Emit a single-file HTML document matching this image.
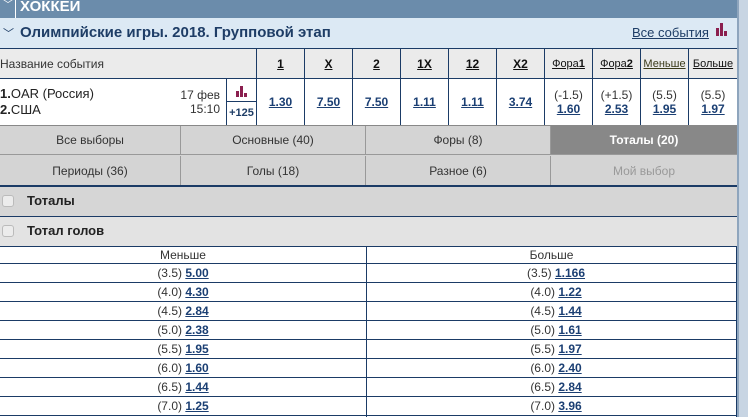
<!DOCTYPE html>
<html><head><meta charset="utf-8"><style>
*{box-sizing:border-box;margin:0;padding:0}
body{width:748px;height:417px;overflow:hidden;background:#fff;font-family:"Liberation Sans",Arial,sans-serif;font-size:12px;color:#333;position:relative}
.a{position:absolute}
.c{display:flex;align-items:center;justify-content:center}
a{color:#1b3f73;text-decoration:underline;font-weight:bold}
.hd a{color:#111;font-weight:bold}
.bar{display:inline-block;position:relative;width:12px;height:12px}
.bar i{position:absolute;bottom:0;width:3px;background:#8b1f4f}
</style></head><body>
<div class="a" style="left:737px;top:0;width:11px;height:417px;background:#c8d5e3;border-left:2px solid #8ea5bd"></div>
<div class="a" style="left:0;top:0;width:737px;height:18px;background:#6b8cab;color:#fff;font-weight:bold;font-size:15px;line-height:14px;padding-left:20px">ХОККЕЙ</div>
<div class="a" style="left:0;top:0;width:16px;height:18px;border-right:1px solid #fff;color:#fff;font-size:10px;line-height:12px;padding-left:3px">﹀</div>
<div class="a" style="left:0;top:18px;width:737px;height:30px;background:#dce9f4"></div>
<div class="a" style="left:3px;top:25px;color:#1e3d66;font-size:11px">﹀</div>
<div class="a" style="left:20px;top:24px;color:#1e3d66;font-weight:bold;font-size:15px">Олимпийские игры. 2018. Групповой этап</div>
<div class="a" style="left:632px;top:25px;font-size:13px"><a style="font-weight:normal;color:#1e3d66">Все события</a></div>
<div class="a" style="left:716px;top:24px"><span class="bar"><i style="left:0;height:8px"></i><i style="left:4px;height:13px"></i><i style="left:8px;height:5px"></i></span></div>
<div class="a" style="left:0;top:48px;width:737px;height:31px;background:#ebebeb;border-top:1px solid #1b3b66;border-bottom:1px solid #1b3b66"></div>
<div class="a" style="left:0;top:57px;font-size:12px;color:#333">Название события</div>
<div class="a hd" style="left:256px;top:48px;width:481px;height:31px;display:flex">
<div class="c" style="width:48px;border-left:1px solid #1b3b66"><a>1</a></div>
<div class="c" style="width:48px;border-left:1px solid #1b3b66"><a>X</a></div>
<div class="c" style="width:48px;border-left:1px solid #1b3b66"><a>2</a></div>
<div class="c" style="width:48px;border-left:1px solid #1b3b66"><a>1X</a></div>
<div class="c" style="width:48px;border-left:1px solid #1b3b66"><a>12</a></div>
<div class="c" style="width:48px;border-left:1px solid #1b3b66"><a>X2</a></div>
<div class="c" style="width:48px;border-left:1px solid #1b3b66;font-size:11px"><a style="font-weight:normal">Фора<b>1</b></a></div>
<div class="c" style="width:48px;border-left:1px solid #1b3b66;font-size:11px"><a style="font-weight:normal">Фора<b>2</b></a></div>
<div class="c" style="width:48px;border-left:1px solid #1b3b66;font-size:11px"><a style="font-weight:normal;color:#3a3a1a">Меньше</a></div>
<div class="c" style="width:49px;border-left:1px solid #1b3b66;font-size:11px"><a style="font-weight:normal">Больше</a></div>
</div>
<div class="a" style="left:0;top:86px;font-size:13px;line-height:16px;color:#222"><b>1.</b>OAR (Россия)<br><b>2.</b>США</div>
<div class="a" style="left:150px;top:88px;width:70px;text-align:right;font-size:12px;line-height:14px;color:#333">17 фев<br>15:10</div>
<div class="a" style="left:226px;top:79px;width:30px;height:46px;border-left:1px solid #1b3b66"></div>
<div class="a" style="left:226px;top:101px;width:30px;height:1px;background:#1b3b66"></div>
<div class="a" style="left:236px;top:85px"><span class="bar"><i style="left:0;height:6px"></i><i style="left:4px;height:11px"></i><i style="left:8px;height:4px"></i></span></div>
<div class="a" style="left:227px;top:107px;width:29px;text-align:center;font-size:11px;font-weight:bold;color:#1e3d66">+125</div>
<div class="a" style="left:256px;top:79px;width:481px;height:46px;display:flex;font-size:12px">
<div class="c" style="width:48px;border-left:1px solid #1b3b66"><a>1.30</a></div>
<div class="c" style="width:48px;border-left:1px solid #1b3b66"><a>7.50</a></div>
<div class="c" style="width:48px;border-left:1px solid #1b3b66"><a>7.50</a></div>
<div class="c" style="width:48px;border-left:1px solid #1b3b66"><a>1.11</a></div>
<div class="c" style="width:48px;border-left:1px solid #1b3b66"><a>1.11</a></div>
<div class="c" style="width:48px;border-left:1px solid #1b3b66"><a>3.74</a></div>
<div class="c" style="width:48px;border-left:1px solid #1b3b66;flex-direction:column;line-height:14px"><span>(-1.5)</span><a>1.60</a></div>
<div class="c" style="width:48px;border-left:1px solid #1b3b66;flex-direction:column;line-height:14px"><span>(+1.5)</span><a>2.53</a></div>
<div class="c" style="width:48px;border-left:1px solid #1b3b66;flex-direction:column;line-height:14px"><span>(5.5)</span><a>1.95</a></div>
<div class="c" style="width:49px;border-left:1px solid #1b3b66;flex-direction:column;line-height:14px"><span>(5.5)</span><a>1.97</a></div>
</div>
<div class="a" style="left:0;top:125px;width:737px;height:61px;background:#d4d4d4;border-top:1px solid #888"></div>
<div class="a" style="left:0;top:126px;width:737px;height:60px;display:flex;flex-wrap:wrap;color:#333">
<div class="c" style="width:181px;height:29px;border-right:1px solid #999;border-bottom:1px solid #999">Все выборы</div>
<div class="c" style="width:185px;height:29px;border-right:1px solid #999;border-bottom:1px solid #999">Основные (40)</div>
<div class="c" style="width:185px;height:29px;border-right:1px solid #999;border-bottom:1px solid #999">Форы (8)</div>
<div class="c" style="width:186px;height:29px;background:#888;color:#fff;font-weight:bold;border-bottom:1px solid #999">Тоталы (20)</div>
<div class="c" style="width:181px;height:30px;border-right:1px solid #999">Периоды (36)</div>
<div class="c" style="width:185px;height:30px;border-right:1px solid #999">Голы (18)</div>
<div class="c" style="width:185px;height:30px;border-right:1px solid #999">Разное (6)</div>
<div class="c" style="width:186px;height:30px;color:#999">Мой выбор</div>
</div>
<div class="a" style="left:0;top:185px;width:737px;height:32px;background:#d6d6d6;border-top:2px solid #1b3b66;border-bottom:1px solid #1b3b66"></div>
<div class="a" style="left:2px;top:195px;width:12px;height:12px;border:1px solid #bbb;background:#ececec;border-radius:3px"></div>
<div class="a" style="left:27px;top:193px;font-weight:bold;font-size:13px;color:#222">Тоталы</div>
<div class="a" style="left:0;top:217px;width:737px;height:30px;background:#e3e3e3;border-bottom:1px solid #1b3b66"></div>
<div class="a" style="left:2px;top:225px;width:12px;height:12px;border:1px solid #bbb;background:#ececec;border-radius:3px"></div>
<div class="a" style="left:27px;top:223px;font-weight:bold;font-size:13px;color:#222">Тотал голов</div>
<div class="a" style="left:0;top:247px;width:737px;height:17px;background:#fff;border-bottom:1px solid #1b3b66"></div>
<div class="a" style="left:0;top:248px;width:366px;text-align:center">Меньше</div>
<div class="a" style="left:366px;top:248px;width:371px;text-align:center">Больше</div>
<div class="a" style="left:366px;top:247px;width:1px;height:170px;background:#1b3b66"></div>
<div class="a" style="left:736px;top:247px;width:1px;height:170px;background:#1b3b66"></div>
<div class="a" style="left:0;top:264px;width:736px">
<style>.r{height:19px;border-bottom:1px solid #1b3b66;display:flex;line-height:18px}.r div{text-align:center}.r div:first-child{width:366px}.r div:last-child{width:370px;padding-left:10px}</style>
<div class="r"><div>(3.5) <a>5.00</a></div><div>(3.5) <a>1.166</a></div></div>
<div class="r"><div>(4.0) <a>4.30</a></div><div>(4.0) <a>1.22</a></div></div>
<div class="r"><div>(4.5) <a>2.84</a></div><div>(4.5) <a>1.44</a></div></div>
<div class="r"><div>(5.0) <a>2.38</a></div><div>(5.0) <a>1.61</a></div></div>
<div class="r"><div>(5.5) <a>1.95</a></div><div>(5.5) <a>1.97</a></div></div>
<div class="r"><div>(6.0) <a>1.60</a></div><div>(6.0) <a>2.40</a></div></div>
<div class="r"><div>(6.5) <a>1.44</a></div><div>(6.5) <a>2.84</a></div></div>
<div class="r"><div>(7.0) <a>1.25</a></div><div>(7.0) <a>3.96</a></div></div>
</div>
</body></html>
